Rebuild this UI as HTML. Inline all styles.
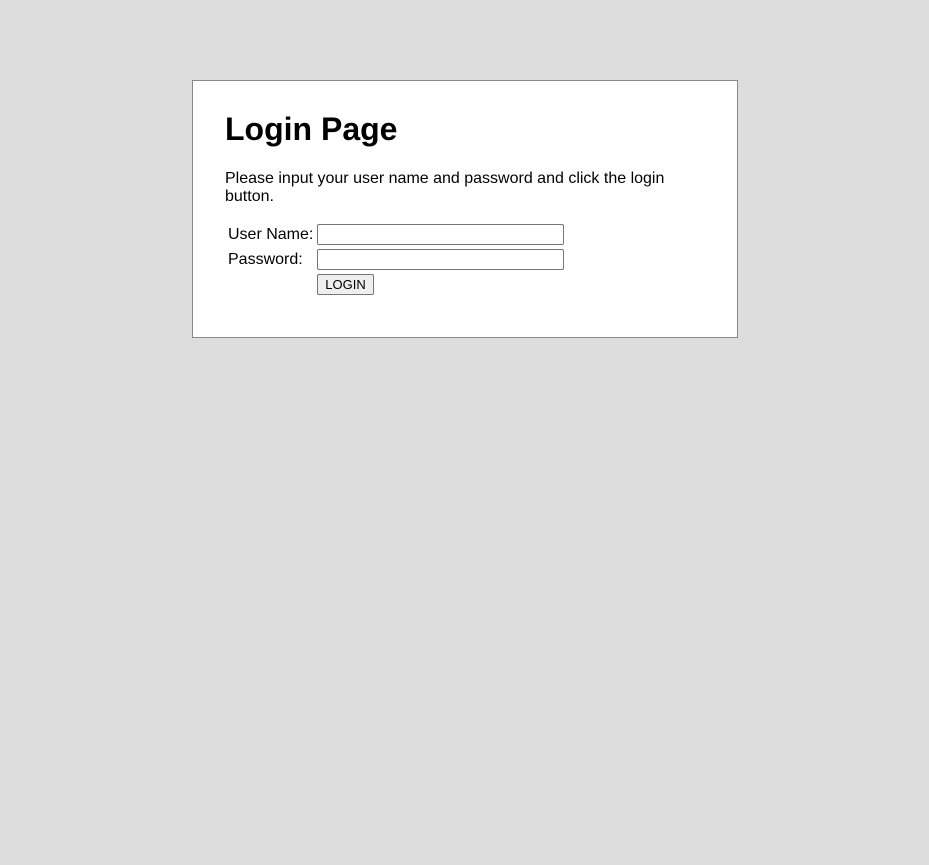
<!DOCTYPE html>
<html><head><meta charset="utf-8"><style>
html,body{margin:0;padding:0;background:#dddddd;width:929px;height:865px;overflow:hidden;font-family:"Liberation Sans",Arial,sans-serif;color:#000}
.box{position:absolute;left:192px;top:80px;width:544px;height:256px;background:#fff;border:1px solid #888}
h1{position:absolute;left:32px;top:28px;margin:0;font-size:32px;font-weight:bold;line-height:40px}
p{position:absolute;left:32px;top:89px;margin:0;font-size:16px;line-height:18px;width:460px}
.lbl{position:absolute;font-size:16px;line-height:18px;left:35px}
.inp{position:absolute;left:124px;width:245px;height:19px;border:1px solid #767676;border-radius:2px;background:#fff}
.btn{position:absolute;left:124px;top:193px;width:55px;height:19px;border:1px solid #767676;border-radius:2px;background:#efefef;font-size:13px;line-height:19px;text-align:center}
</style></head><body>
<div class="box">
<h1>Login Page</h1>
<p>Please input your user name and password and click the login button.</p>
<div class="lbl" style="top:145px">User Name:</div>
<div class="lbl" style="top:170px">Password:</div>
<div class="inp" style="top:143px"></div>
<div class="inp" style="top:168px"></div>
<div class="btn">LOGIN</div>
</div>
</body></html>
